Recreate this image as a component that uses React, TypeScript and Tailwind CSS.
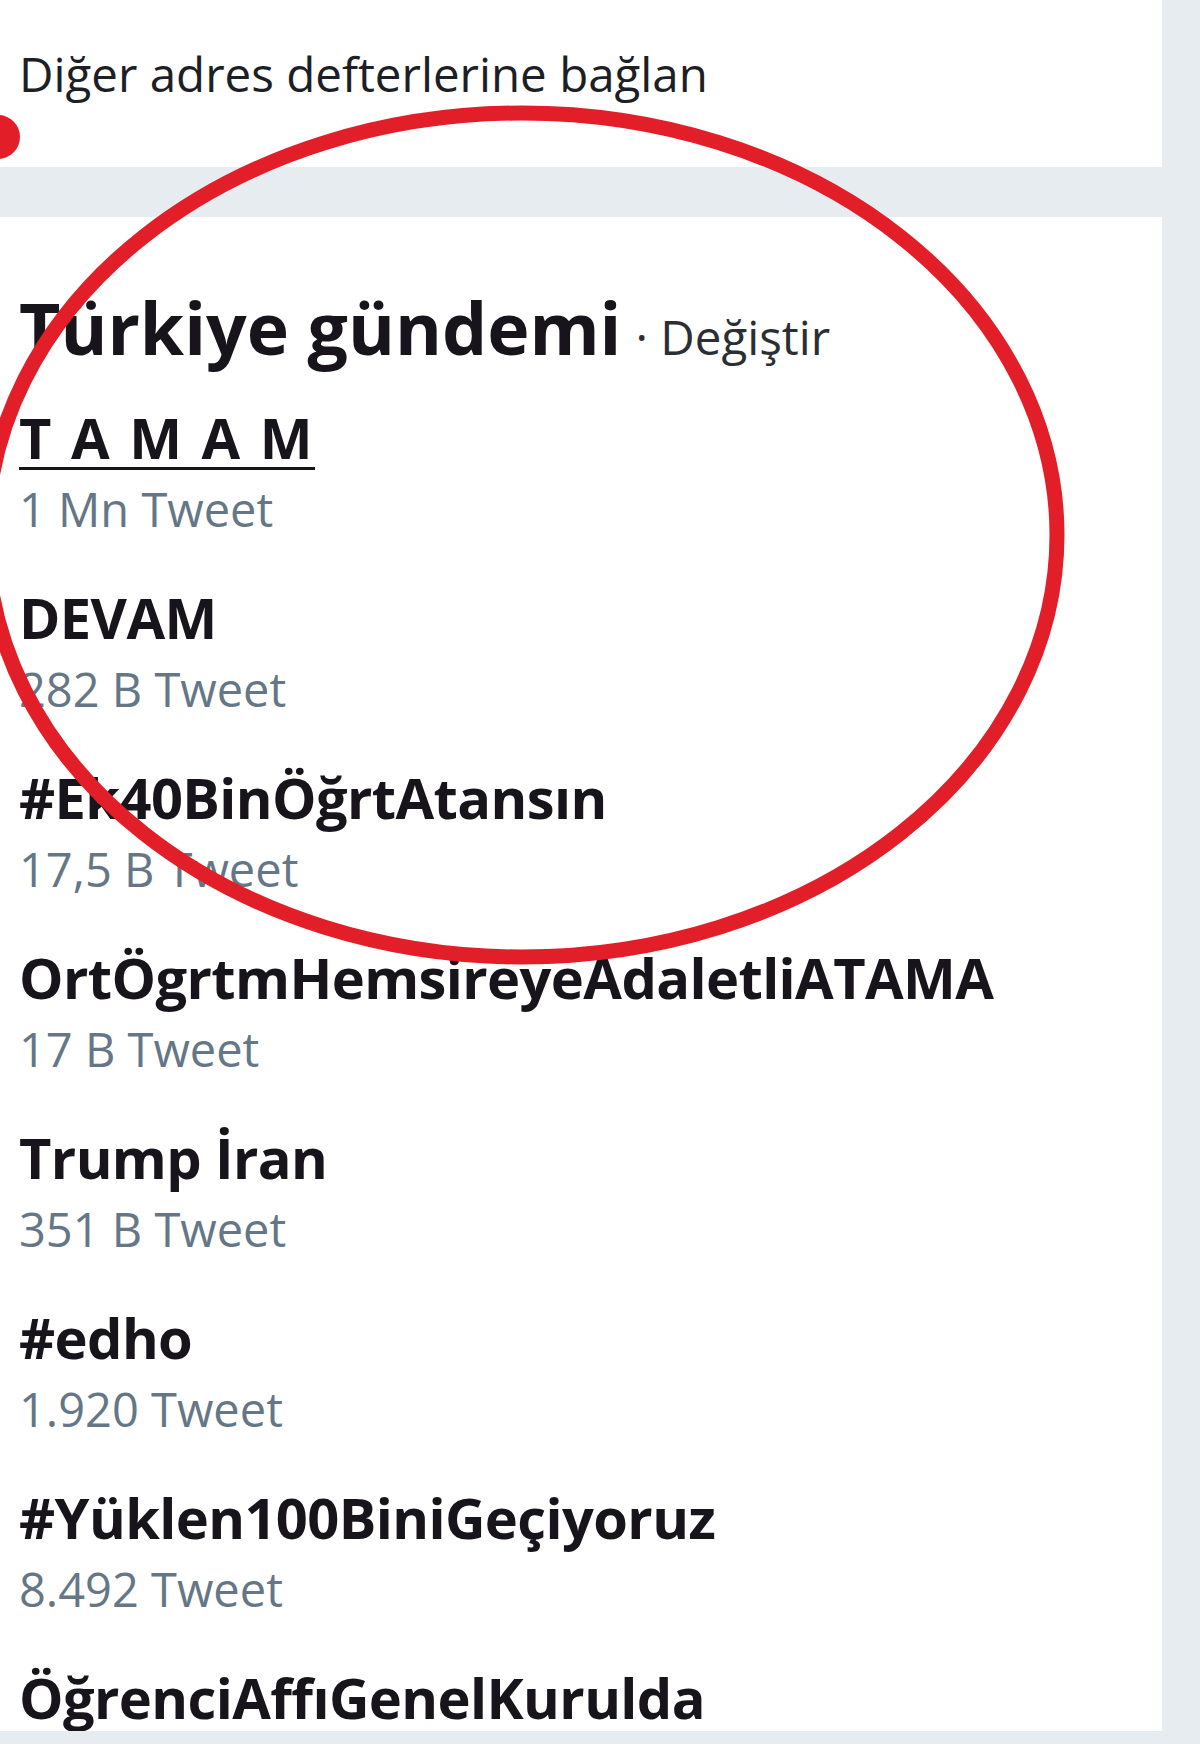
const trends = [
  { name: 'T A M A M', count: '1 Mn Tweet', underline: true },
  { name: 'DEVAM', count: '282 B Tweet' },
  { name: '#Ek40BinÖğrtAtansın', count: '17,5 B Tweet' },
  { name: 'OrtÖgrtmHemsireyeAdaletliATAMA', count: '17 B Tweet' },
  { name: 'Trump İran', count: '351 B Tweet' },
  { name: '#edho', count: '1.920 Tweet' },
  { name: '#Yüklen100BiniGeçiyoruz', count: '8.492 Tweet' },
  { name: 'ÖğrenciAffıGenelKurulda' },
]

function TrendItem({ name, count, underline }: { name: string; count?: string; underline?: boolean }) {
  return (
    <li className="flex flex-col">
      <span
        className={
          'h-[64px] text-[56px] leading-[64px] font-bold text-[#17141c] whitespace-nowrap ' +
          (underline
            ? 'tracking-[2.5px] underline decoration-[3px] underline-offset-[8px]'
            : 'tracking-[-0.6px]')
        }
      >
        {name}
      </span>
      {count && (
        <span className="mt-[12px] h-[56px] text-[47px] leading-[56px] text-[#657786] whitespace-nowrap">
          {count}
        </span>
      )}
    </li>
  )
}

export default function App() {
  return (
    <div
      className="relative w-[1200px] h-[1744px] overflow-hidden bg-[#e6ecf0]"
      style={{ fontFamily: '"Open Sans", "Noto Sans", Arial, sans-serif' }}
    >
      {/* Adres defterleri kartı */}
      <div className="w-[1162px] h-[167px] bg-white pl-[19px] pt-[44px]">
        <p className="text-[47.5px] leading-[60px] text-[#1c2025] whitespace-nowrap">
          Diğer adres defterlerine bağlan
        </p>
      </div>

      {/* Gündem kartı */}
      <div className="mt-[50px] w-[1162px] h-[1514px] overflow-hidden bg-white pl-[19px] pt-[71px]">
        <h2 className="flex items-baseline h-[80px] leading-[80px] whitespace-nowrap">
          <span className="text-[71.5px] font-bold text-[#17141c]">Türkiye gündemi</span>
          <span className="ml-[14px] text-[47.5px] text-[#2b2f33]">· Değiştir</span>
        </h2>

        <ul className="mt-[37px] flex flex-col gap-[48px]">
          {trends.map((t) => (
            <TrendItem key={t.name} {...t} />
          ))}
        </ul>
      </div>

      {/* Kırmızı işaret */}
      <svg
        className="absolute inset-0 pointer-events-none"
        width="1200"
        height="1744"
        viewBox="0 0 1200 1744"
      >
        <ellipse cx="522" cy="535" rx="535" ry="422" fill="none" stroke="#e21f29" strokeWidth="15" />
        <circle cx="-2" cy="137" r="22" fill="#e21f29" />
      </svg>
    </div>
  )
}
